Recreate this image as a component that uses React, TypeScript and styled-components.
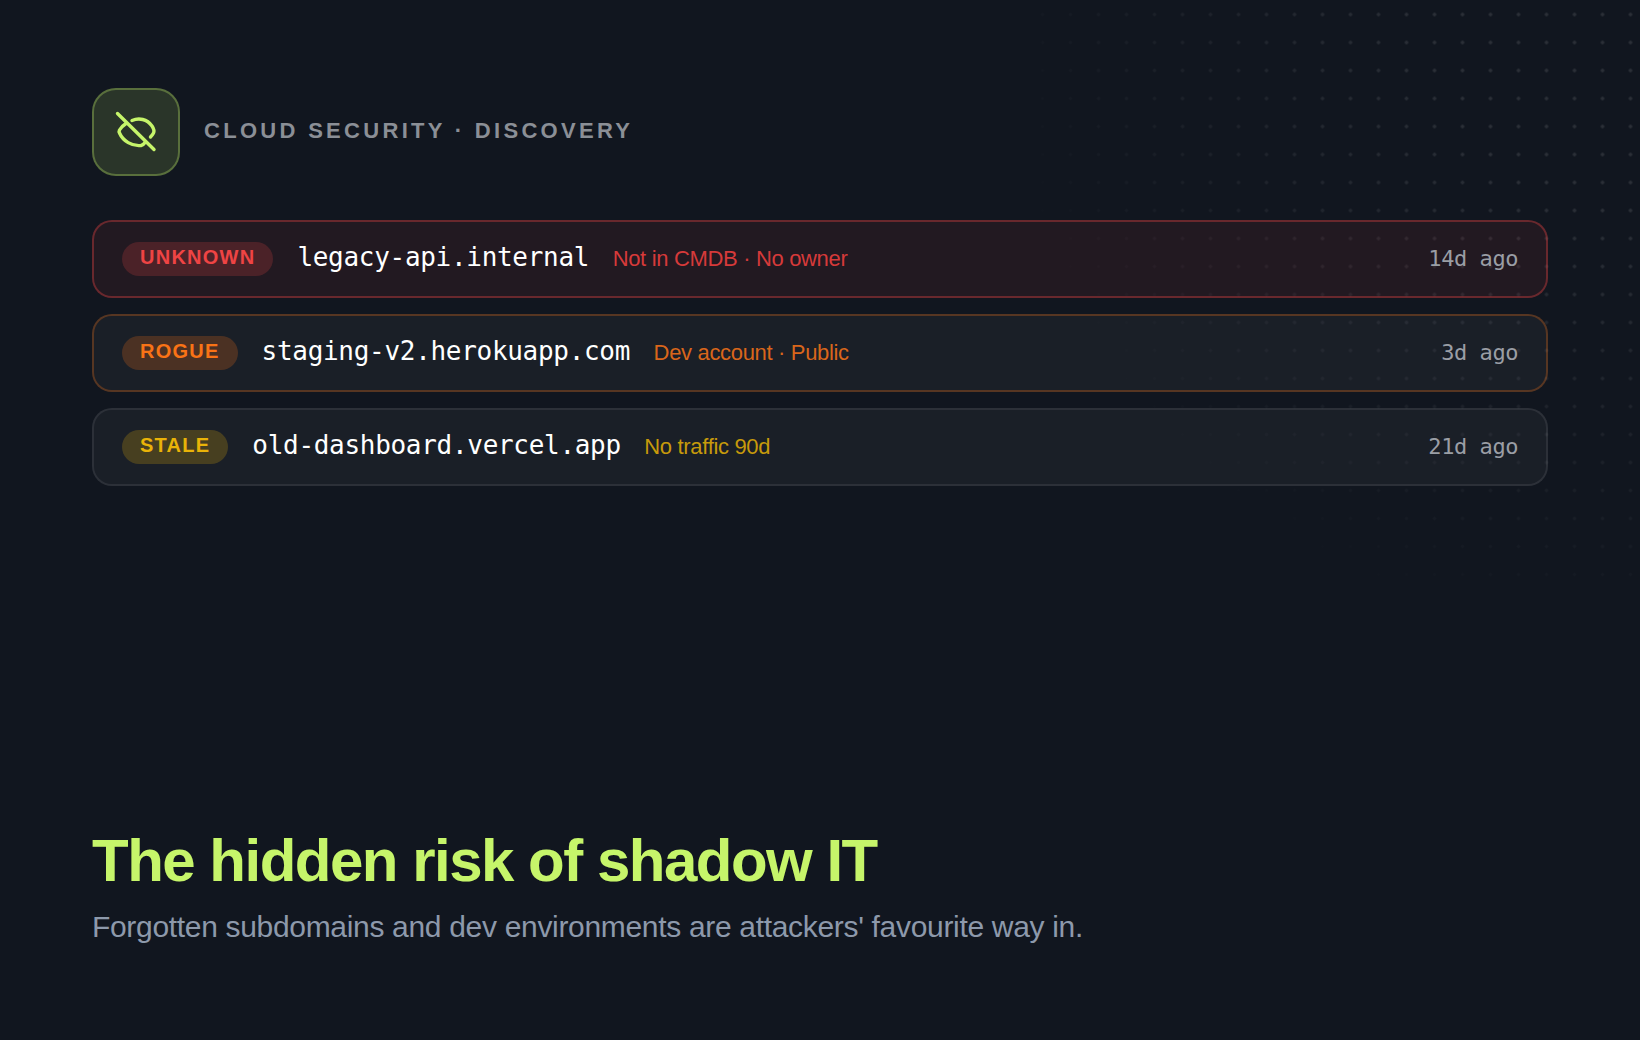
import styled, { createGlobalStyle } from 'styled-components';

const GlobalStyle = createGlobalStyle`
  html, body {
    margin: 0;
    padding: 0;
    background: #11161f;
  }
`;

type Tone = 'red' | 'orange' | 'yellow';

const tones = {
  red: {
    main: '#ef4444',
    meta: '#d63a3a',
    pill: 'rgba(239, 68, 68, 0.2)',
    row: 'rgba(239, 68, 68, 0.08)',
    border: 'rgba(239, 68, 68, 0.35)',
  },
  orange: {
    main: '#f97316',
    meta: '#d9661b',
    pill: 'rgba(249, 115, 22, 0.22)',
    row: 'rgba(255, 255, 255, 0.04)',
    border: 'rgba(249, 115, 22, 0.28)',
  },
  yellow: {
    main: '#eab308',
    meta: '#c79a0b',
    pill: 'rgba(234, 179, 8, 0.22)',
    row: 'rgba(255, 255, 255, 0.04)',
    border: 'rgba(255, 255, 255, 0.08)',
  },
};

const assets: { tone: Tone; tag: string; host: string; note: string; age: string }[] = [
  { tone: 'red', tag: 'UNKNOWN', host: 'legacy-api.internal', note: 'Not in CMDB · No owner', age: '14d ago' },
  { tone: 'orange', tag: 'ROGUE', host: 'staging-v2.herokuapp.com', note: 'Dev account · Public', age: '3d ago' },
  { tone: 'yellow', tag: 'STALE', host: 'old-dashboard.vercel.app', note: 'No traffic 90d', age: '21d ago' },
];

const App = () => (
  <>
    <GlobalStyle />
    <Page>
      <Dots />
      <Header>
        <IconTile>
          <svg width="56" height="56" viewBox="0 0 56 56" fill="none" stroke="#c6f56a" strokeWidth="3.4" strokeLinecap="round" strokeLinejoin="round">
            <path d="M24 16.500C31 13.500 39 15 44 22C46 25 46.500 27 45.500 29C44.500 31 43.500 32 42.500 33" />
            <path d="M18 19.500C15 21.500 13 23.500 11.500 26C11 27 11 28 11.500 29C15 37 24 42.500 33 41.500C35 41 36 40 37 38.500" />
            <path d="M9.500 9.500L46 45.500" />
          </svg>
        </IconTile>
        <Eyebrow>CLOUD SECURITY · DISCOVERY</Eyebrow>
      </Header>

      <List>
        {assets.map((a) => (
          <Row key={a.host} $tone={a.tone}>
            <Tag $tone={a.tone}>{a.tag}</Tag>
            <Host>{a.host}</Host>
            <Note $tone={a.tone}>{a.note}</Note>
            <Age>{a.age}</Age>
          </Row>
        ))}
      </List>

      <Footer>
        <Title>The hidden risk of shadow IT</Title>
        <Subtitle>Forgotten subdomains and dev environments are attackers' favourite way in.</Subtitle>
      </Footer>
    </Page>
  </>
);

const Page = styled.div`
  position: relative;
  box-sizing: border-box;
  width: 1640px;
  height: 1040px;
  padding: 88px 92px 96px;
  display: flex;
  flex-direction: column;
  overflow: hidden;
  background: #11161f;
  font-family: 'Liberation Sans', Arial, sans-serif;
`;

const Dots = styled.div`
  position: absolute;
  top: 0;
  right: 0;
  width: 600px;
  height: 600px;
  background-image: radial-gradient(circle, rgba(255, 255, 255, 0.11) 1.5px, transparent 1.9px);
  background-size: 28px 28px;
  background-position: 16.5px 0.5px;
  mask-image: radial-gradient(ellipse at top right, black 25%, transparent 78%);
`;

const Header = styled.div`
  position: relative;
  display: flex;
  align-items: center;
  gap: 24px;
  margin-bottom: 44px;
`;

const IconTile = styled.div`
  box-sizing: border-box;
  width: 88px;
  height: 88px;
  display: flex;
  align-items: center;
  justify-content: center;
  border: 2px solid rgba(198, 245, 106, 0.3);
  border-radius: 24px;
  background: rgba(198, 245, 106, 0.14);
`;

const Eyebrow = styled.div`
  font-size: 22px;
  font-weight: 700;
  letter-spacing: 0.15em;
  color: #8b8f96;
  margin-top: -3px;
`;

const List = styled.div`
  position: relative;
  display: flex;
  flex-direction: column;
  gap: 16px;
`;

const Row = styled.div<{ $tone: Tone }>`
  box-sizing: border-box;
  height: 78px;
  padding: 0 28px;
  display: flex;
  align-items: center;
  gap: 24px;
  border: 2px solid ${(p) => tones[p.$tone].border};
  border-radius: 20px;
  background: ${(p) => tones[p.$tone].row};
`;

const Tag = styled.span<{ $tone: Tone }>`
  box-sizing: border-box;
  height: 34px;
  padding: 0 18px 3px;
  display: flex;
  align-items: center;
  border-radius: 999px;
  font-size: 20px;
  font-weight: 700;
  letter-spacing: 1.25px;
  color: ${(p) => tones[p.$tone].main};
  background: ${(p) => tones[p.$tone].pill};
`;

const Host = styled.span`
  padding-bottom: 4px;
  margin-right: -0.5px;
  font-family: 'DejaVu Sans Mono', monospace;
  font-size: 26px;
  letter-spacing: -0.3px;
  color: #ffffff;
`;

const Note = styled.span<{ $tone: Tone }>`
  font-size: 22px;
  letter-spacing: -0.33px;
  color: ${(p) => tones[p.$tone].meta};
`;

const Age = styled.span`
  margin-left: auto;
  padding-bottom: 2px;
  font-family: 'DejaVu Sans Mono', monospace;
  font-size: 22px;
  letter-spacing: -0.44px;
  color: #9a9ea5;
`;

const Footer = styled.div`
  position: relative;
  margin-top: auto;
`;

const Title = styled.h1`
  margin: 0;
  font-size: 60px;
  line-height: 1.1;
  font-weight: 700;
  letter-spacing: -0.025em;
  color: #c6f56a;
`;

const Subtitle = styled.p`
  margin: 16px 0 0;
  font-size: 30px;
  letter-spacing: -0.32px;
  color: #8d99ab;
`;

export default App;
